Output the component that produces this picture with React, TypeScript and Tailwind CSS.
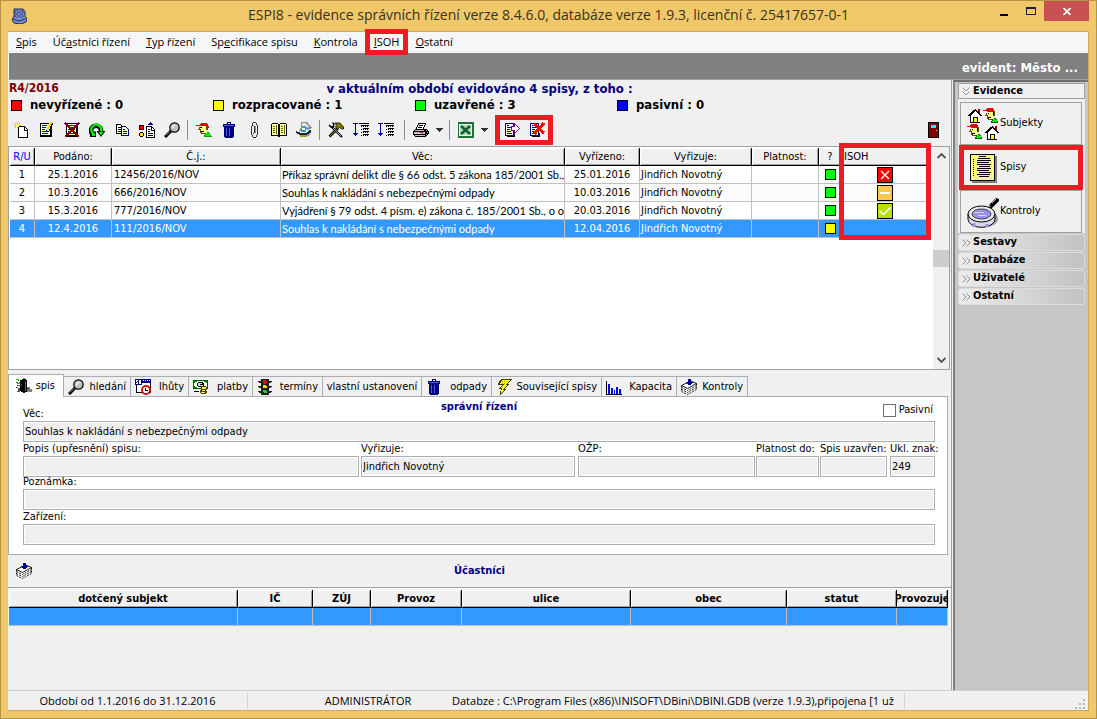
import type { ReactNode } from 'react'

const UI_FONT = "font-['DejaVu_Sans_Condensed','DejaVu_Sans',sans-serif]"
const SYS_FONT = "font-['Open_Sans','Noto_Sans',sans-serif]"

const MENU = [
  { pre: '', key: 'S', post: 'pis' },
  { pre: 'Úč', key: 'a', post: 'stníci řízení' },
  { pre: '', key: 'T', post: 'yp řízení' },
  { pre: 'Sp', key: 'e', post: 'cifikace spisu' },
  { pre: '', key: 'K', post: 'ontrola' },
  { pre: '', key: 'I', post: 'SOH', marked: true },
  { pre: '', key: 'O', post: 'statní' },
]

const COUNTERS = [
  { color: 'bg-[#ff0000]', label: 'nevyřízené : 0' },
  { color: 'bg-[#ffff00]', label: 'rozpracované : 1' },
  { color: 'bg-[#00ff00]', label: 'uzavřené : 3' },
  { color: 'bg-[#0000ff]', label: 'pasivní : 0' },
]

type Isoh = 'error' | 'wait' | 'ok' | null

const FILES: { n: number; filed: string; ref: string; subject: string; done: string; by: string; state: string; isoh: Isoh }[] = [
  { n: 1, filed: '25.1.2016', ref: '12456/2016/NOV', subject: 'Příkaz správní delikt dle § 66 odst. 5 zákona 185/2001 Sb.,', done: '25.01.2016', by: 'Jindřich Novotný', state: 'bg-[#00ff00]', isoh: 'error' },
  { n: 2, filed: '10.3.2016', ref: '666/2016/NOV', subject: 'Souhlas k nakládání s nebezpečnými odpady', done: '10.03.2016', by: 'Jindřich Novotný', state: 'bg-[#00ff00]', isoh: 'wait' },
  { n: 3, filed: '15.3.2016', ref: '777/2016/NOV', subject: 'Vyjádření § 79 odst. 4 písm. e) zákona č. 185/2001 Sb., o o', done: '20.03.2016', by: 'Jindřich Novotný', state: 'bg-[#00ff00]', isoh: 'ok' },
  { n: 4, filed: '12.4.2016', ref: '111/2016/NOV', subject: 'Souhlas k nakládání s nebezpečnými odpady', done: '12.04.2016', by: 'Jindřich Novotný', state: 'bg-[#ffff00]', isoh: null },
]

/* ---------- icons ---------- */

function Svg({ children, size = 16 }: { children: ReactNode; size?: number }) {
  return (
    <svg width={size} height={size} viewBox={`0 0 ${size} ${size}`} shapeRendering="crispEdges" fill="none" className="shrink-0" aria-hidden="true">
      {children}
    </svg>
  )
}

const NewIcon = () => (
  <Svg>
    <path d="M4 4h7v1h1v1h1v1h1v9H4z" fill="#000" />
    <path d="M5 5h5v4h3v6H5z" fill="#fff" />
    <path d="M11 6h1v1h1v1h-2z" fill="#fff" />
    <path d="M3 0h1v2H3zM0 3h2v1H0zM1 1h1v1H1zM5 1h1v1H5zM1 5h1v1H1zM3 5h1v1H3zM5 3h2v1H5z" fill="#c8b400" />
    <path d="M2 2h3v3H2z" fill="#ffff66" />
  </Svg>
)

const EditIcon = () => (
  <Svg>
    <path d="M1 1h12v14H1z" fill="#000" />
    <path d="M2 2h9v11H2z" fill="#fff" />
    <path d="M3 3h5v1H3zM3 5h4v1H3zM3 7h3v1H3zM3 9h6v1H3zM3 11h6v1H3z" fill="#00f" />
    <path d="M11 0h2v2h-1v2h-1v2h-1v2H9v1H7V7h1V5h1V3h1V1h1z" fill="#ffe000" />
    <path d="M13 1h1v2h-1v2h-1v2h-1v2h-1v1H9V9h1V7h1V5h1V3h1z" fill="#000" />
    <path d="M7 8h1v2H7z" fill="#000" />
  </Svg>
)

const DeleteIcon = () => (
  <Svg>
    <path d="M2 1h12v14H2z" fill="#000" />
    <path d="M3 2h9v11H3z" fill="#fff" />
    <path d="M4 3h7v1H4zM4 5h7v1H4zM4 7h7v1H4zM4 9h7v1H4zM4 11h7v1H4z" fill="#00f" />
    <path d="M1 1l14 14M15 1L1 15" stroke="#800000" strokeWidth="2" />
  </Svg>
)

const RefreshIcon = () => (
  <Svg>
    <g shapeRendering="auto">
      <path d="M4.500 13A5 5 0 1 1 12 9.500" stroke="#000" strokeWidth="4.600" />
      <path d="M1 9.500h6V15H1zM7.500 9h9L12 15z" fill="#000" />
      <path d="M4 11.500A5 5 0 1 1 12 9.500" stroke="#0e0" strokeWidth="2.400" />
      <path d="M3 11h3v3H3zM9.500 10h5L12 13.500z" fill="#0e0" />
    </g>
  </Svg>
)

const CopyIcon = () => (
  <Svg>
    <path d="M2.500 2.500h4l2 2v7h-6z" fill="#fff" stroke="#000" />
    <path d="M4 5.500h3M4 7.500h3M4 9.500h3" stroke="#000" />
    <path d="M7.500 4.500h4l3 3v6h-7z" fill="#fff" stroke="#000080" />
    <path d="M9 7.500h2M9 9.500h4M9 11.500h4" stroke="#000080" />
  </Svg>
)

const CategoryIcon = () => (
  <Svg>
    <path d="M.5 3.500h4v4h-4z" fill="#f00" stroke="#000" />
    <path d="M1 10h3v1h1v3H4v1H1v-1H0v-3h1z" fill="#000" />
    <path d="M1 11h3v3H1z" fill="#ffe000" />
    <path d="M11 0h1v1h1v1h1v1H9V2h1V1h1z" fill="#0000c0" />
    <path d="M7.500 4.500h5l3 3v8h-8z" fill="#fff" stroke="#000" />
    <path d="M12 5h1v3h3v1h-4zM9 7h2v1H9zM9 9h2v1H9zM9 11h5v1H9zM9 13h5v1H9z" fill="#000" />
  </Svg>
)

const SearchIcon = () => (
  <Svg>
    <g shapeRendering="auto">
      <path d="M7 9l-6 6" stroke="#000" strokeWidth="3" />
      <circle cx="10.500" cy="5.500" r="4.700" fill="#c0c0c0" stroke="#000" strokeWidth="1.200" />
      <path d="M8 6l3-3" stroke="#fff" strokeWidth="1.200" />
      <path d="M6 9.500L2 13.500" stroke="#909090" />
    </g>
  </Svg>
)

const PersonIcon = () => (
  <Svg>
    <path d="M4 3h8v5h-1v4H5v-1H4V8H2V7h1z" fill="#605000" />
    <path d="M4 4h6v4h1v3H6v-1H5V7H4z" fill="#ffff90" />
    <path d="M5 1h6v1h1v2h1v2h-2V4H0V3h4V2h1z" fill="#e00000" />
    <path d="M4 5h2v1H4zM5 9h3v1H5z" fill="#000" />
    <path d="M8 15v-2h1v-2h2v-1h2v1h1v2h1v1h1v1z" fill="#00a000" />
    <path d="M9 14v-1h1v-2h3v1h1v2z" fill="#00f000" />
  </Svg>
)

const TrashIcon = () => (
  <Svg>
    <path d="M2 2h4V0h4v2h4v3h-1v10h-1v1H4v-1H3V5H2z" fill="#000080" />
    <path d="M3 3h10v1H3zM5 6h1v8H5zM8 6h1v8H8z" fill="#4060e0" />
    <path d="M7 1h2v1H7z" fill="#fff" />
  </Svg>
)

const ClipIcon = () => (
  <Svg>
    <path d="M7 0h3v1H7zM6 1h1v3H6zM10 1h1v2h-1zM11 3h1v10h-1zM5 4h1v9H5zM8 4h1v7H8zM7 11h1v1H7zM6 13h1v2H6zM10 13h1v2h-1zM7 15h3v1H7z" fill="#303030" />
    <path d="M7 3h1v1H7zM9 4h1v7H9z" fill="#909090" />
  </Svg>
)

const BookIcon = () => (
  <Svg>
    <path d="M0 2h1V1h6v1h2V1h6v1h1v12H9v1H7v-1H0z" fill="#000" />
    <path d="M1 2h6v11H1zM9 2h6v11H9z" fill="#ffffa0" />
    <path d="M2 4h2v1H2zM2 6h2v1H2zM2 8h2v1H2zM2 10h2v1H2zM10 4h2v1h-2zM10 6h2v1h-2zM10 8h2v1h-2zM10 10h2v1h-2zM5 3h1v9H5zM13 3h1v9h-1z" fill="#606000" />
  </Svg>
)

const ScanIcon = () => (
  <Svg>
    <path d="M5 0h6l1 1 2 3 2 1-1 2-4 1-2-2H7L5 9H3l2-4z" fill="#909090" />
    <path d="M6 1h4l3 4-2 1-2-2H6z" fill="#e4e4e4" />
    <path d="M6 5h5l-1 5H5z" fill="#00a8e8" />
    <path d="M6 6h3v2H6z" fill="#fff" />
    <path d="M0 9l5 2h5l4-3 1 1v2l-5 3H7l-7-3z" fill="#202050" />
    <path d="M4 13h6l4-2v2l-4 2H4z" fill="#b0a000" />
  </Svg>
)

const ToolsIcon = () => (
  <Svg>
    <g shapeRendering="auto">
      <path d="M1.500 14.500L10 6" stroke="#000" strokeWidth="2.600" />
      <path d="M2 14L10 6" stroke="#b09000" />
      <path d="M7 1h5l3.500 4v2h-2l-2-2-2 2-2-2 1-2z" fill="#808000" stroke="#000" strokeWidth=".8" />
      <path d="M3.500 4.500L14 15" stroke="#000" strokeWidth="2.200" />
      <path d="M1 3l2 2 2.500-.5L6 2 4.500.5" stroke="#000" strokeWidth="1.400" />
      <path d="M5 6l8 8" stroke="#d0d0d0" strokeWidth=".8" />
    </g>
  </Svg>
)

const SortIcon = () => (
  <Svg>
    <path d="M0 1h5v1H3v9h2v1H4v1H3v1H2v-1H1v-1H0v-1h2V2H0z" fill="#0000a0" />
    <path d="M6 1h10v1H6zM8 3h8v1H8zM10 6h6v1h-6zM10 9h6v1h-6zM10 12h6v1h-6z" fill="#000" />
    <path d="M8 4.500h8M8 7.500h8M8 10.500h8M8 13.500h8" stroke="#000" strokeDasharray="1 1" />
  </Svg>
)

const PrinterIcon = () => (
  <Svg>
    <path d="M5 1h8v2h-1v2h-1v2h3v1h1v1h1v3h-1v1h-1v1h-1v1H2v-1H1v-1H0V9h1V8h1V7h1V5h1V3h1z" fill="#000" />
    <path d="M6 2h6v1h-1v2h-1v2H4V5h1V3h1z" fill="#fff" />
    <path d="M6 3h4v1H6zM5 5h4v1H5z" fill="#000" />
    <path d="M2 8h9v1H2zM1 10h11v2H1zM2 13h10v1H2z" fill="#c0c0c0" />
    <path d="M7 10h3v1H7z" fill="#f00" />
    <path d="M13 8h1v1h-1zM14 10h1v1h-1zM13 12h1v1h-1z" fill="#a0a0a0" />
  </Svg>
)

const ExcelIcon = () => (
  <Svg>
    <path d="M0 0h16v16H0z" fill="#1e7038" />
    <path d="M1 2h13v12H1z" fill="#e8f4e8" />
    <path d="M2 3h11v10H2z" fill="#b4d8b4" />
    <g shapeRendering="auto"><path d="M3 4l9 8M12 4l-9 8" stroke="#106030" strokeWidth="2.600" /></g>
  </Svg>
)

const ExportIcon = () => (
  <Svg>
    <path d="M1 1h9v13H1z" fill="#000080" />
    <path d="M2 2h7v11H2zM2 14h9v1H2z" fill="#fff" />
    <path d="M3 15h8v-4h-1v3H3z" fill="#000" />
    <path d="M3 3h2v1H3zM3 5h4v1H3zM3 7h3v1H3zM3 9h4v1H3zM3 11h5v1H3z" fill="#0000a0" />
    <path d="M7.500 4.500h3v-3l5 5-5 5v-3h-3z" fill="#fff" stroke="#800080" />
  </Svg>
)

const ExportDeleteIcon = () => (
  <Svg>
    <path d="M1 1h9v13H1z" fill="#000080" />
    <path d="M2 2h7v11H2z" fill="#fff" />
    <path d="M3 15h8v-4h-1v3H3z" fill="#000" />
    <path d="M3 3h2v1H3zM3 5h4v1H3zM3 7h3v1H3zM3 9h4v1H3zM3 11h5v1H3z" fill="#0000a0" />
    <path d="M5 2l10 9M15 1L5 12" stroke="#f00" strokeWidth="3" />
  </Svg>
)

const DoorIcon = () => (
  <Svg>
    <path d="M2 0h11v16H2z" fill="#000" />
    <path d="M3 1h9v14H3z" fill="#800000" />
    <path d="M5 3h5v3H5z" fill="#00ffff" />
    <path d="M10 8h1v1h-1z" fill="#ffff00" />
  </Svg>
)

const FileTabIcon = () => (
  <Svg>
    <path d="M4 2h2V1h4v1h1v12H9v1H7v-1H5v-1H4z" fill="#000" />
    <path d="M9 3h1v10H9z" fill="#606060" />
    <path d="M0 4h2v1H0zM2 2h1v1H2zM1 7h3v1H1zM0 9h2v1H0zM2 10h2v4H1v-1h1zM5 6h1v2H5z" fill="#505050" />
    <path d="M0 1h3v1H0zM3 4h1v2H1V5h2zM7 0h2v1H7z" fill="#00d000" />
    <path d="M11 9h3v2h2v3h-5z" fill="#808080" />
    <path d="M11 10h2v1h-2z" fill="#303030" />
  </Svg>
)

const DeadlineIcon = () => (
  <Svg>
    <path d="M1.500 1.500h14v12h-14z" fill="#fff" stroke="#000" />
    <path d="M0 0h16v4H7v2H0z" fill="#000080" />
    <path d="M1 1h2v1H2v1h1v2H1V4h1V3H1zM4 1h2v4H4z" fill="#fff" />
    <path d="M8 1.500h7" stroke="#fff" strokeDasharray="1 1" />
    <circle cx="11" cy="11" r="4" fill="#fff" stroke="#e00000" strokeWidth="1.800" shapeRendering="auto" />
    <path d="M10 9h1v2h2v1h-3z" fill="#000" />
  </Svg>
)

const PaymentIcon = () => (
  <Svg>
    <path d="M0 1h15v9H0z" fill="#006000" />
    <path d="M1 2h13v7H1z" fill="#fff" />
    <path d="M1 2h3v1H2v1H1zM11 2h3v2h-1V3h-2zM1 7h1v1h2v1H1z" fill="#008000" />
    <path d="M5 3h5v1h1v3h-1v1H5V7H4V4h1z" fill="#000" />
    <path d="M5 4h4v1H7v1h3v1H5z" fill="#c8e8c8" />
    <path d="M1 12h5v1H1z" fill="#000" />
    <path d="M9 7h4v1h1v3h-1v1h1v2h-1v1H8v-1H7v-3h1V8h1z" fill="#504000" />
    <path d="M9 8h4v2H9zM9 11h3v1H9zM8 13h4v1H8z" fill="#ffe860" />
  </Svg>
)

const LightsIcon = () => (
  <Svg>
    <path d="M4 0h8v2h3v1h-1v1h-2v3h3v1h-1v1h-2v3h3v1h-1v1h-2v2H4v-2H2v-1H1v-1h3V9H2V8H1V7h3V4H2V3H1V2h3z" fill="#202020" />
    <path d="M6 1h3v1h1v2H9v1H7V4H6z" fill="#f00" />
    <path d="M6 6h3v1h1v2H6z" fill="#ffe000" />
    <path d="M6 11h3v1h1v2H7v-1H6z" fill="#00e000" />
  </Svg>
)

const BoltIcon = () => (
  <Svg>
    <path d="M5 0h11l-5 5h2l-5 5h2l-6 6v-2l1-4H3l3-4H2l1-3z" fill="#404000" />
    <path d="M6 1h8l-5 5h2L6 11h2l-3 3 1-5H5l3-4H4z" fill="#ffff00" />
    <path d="M6 2.500h6M6 4.500h3" stroke="#a0a000" strokeDasharray="1 1" />
  </Svg>
)

const ChartIcon = () => (
  <Svg>
    <path d="M0 2h1v13h15v1H0z" fill="#000" />
    <path d="M2 5h2v10H2zM5 9h2v6H5zM8 11h1v4H8zM10 8h2v7h-2zM13 10h2v5h-2z" fill="#0000ff" />
  </Svg>
)

const StackIcon = () => (
  <Svg>
    <path d="M0 6l9-5 7 3v7l-9 5-7-3z" fill="#fff" />
    <g stroke="#000" shapeRendering="auto" strokeWidth=".9">
      <path d="M.5 6.500L9.500 2l6 2.500L6.500 9.500z" />
      <path d="M.5 8.500l6 3 9-5M.5 10.500l6 3 9-5M.5 12.500l6 3 9-5M.5 6.500v6M15.500 4.500v6" strokeDasharray="2 1" />
    </g>
    <path d="M7 0h3v3h2v1h-1v1h-1v1H7V5H6V4H5V3h2z" fill="#0000a0" />
  </Svg>
)

function HouseShape() {
  return (
    <>
      <path d="M7 0h1v1h1v1h1v1h1v1h1v1h1v1h1v1h-2v7H2V7H0V6h1V5h1V4h1V3h1V2h1V1h2z" fill="#000" />
      <path d="M7 2h1v1h1v1h1v1h1v1h1v7H3V6h1V5h1V4h1V3h1z" fill="#fff" />
      <path d="M10 0h2v4h-1V3h-1z" fill="#a00000" />
      <path d="M5 8h5v6H5z" fill="#000" />
      <path d="M6 9h3v4H6z" fill="#ffff00" />
    </>
  )
}

function HeadShape() {
  return (
    <>
      <path d="M4 3h8v5h-1v4H5v-1H4V8H2V7h1z" fill="#605000" />
      <path d="M4 4h6v4h1v3H6v-1H5V7H4z" fill="#ffff90" />
      <path d="M4 0h6v1h1v3H9V3H0V2h3V1h1z" fill="#e80000" />
      <path d="M10 4h1v3h-1zM5 5h1v1H5zM5 9h3v1H5z" fill="#000" />
      <path d="M8 15v-2h1v-2h2v-1h2v1h1v2h1v2z" fill="#006000" />
      <path d="M9 14v-1h1v-2h3v1h1v2z" fill="#00f000" />
    </>
  )
}

const SubjectsIcon = () => (
  <Svg size={32}>
    <g transform="translate(1 1)"><HouseShape /></g>
    <g transform="translate(16 0)"><HeadShape /></g>
    <g transform="translate(0 16)"><HeadShape /></g>
    <g transform="translate(18 18)"><HouseShape /></g>
  </Svg>
)

const PaperIcon = () => (
  <Svg size={32}>
    <path d="M5 4h25v27H5z" fill="#808080" />
    <path d="M3.500 2.500h24v26h-24z" fill="#ffff60" stroke="#000" />
    <path d="M5.500 4.500h20v22h-20z" stroke="#ffffb0" strokeDasharray="1 1" />
    <path d="M12 4.500h7M11 6.500h12M10 8.500h14M10 10.500h12M10 12.500h14M12 14.500h11M10 16.500h14M10 18.500h12M12 20.500h12M10 22.500h13M12 24.500h10" stroke="#000" />
    <path d="M6.500 7v18" stroke="#000" strokeDasharray="1 1" />
  </Svg>
)

const LensIcon = () => (
  <Svg size={32}>
    <g shapeRendering="auto">
      <ellipse cx="18" cy="23" rx="13" ry="8" fill="#707070" opacity=".6" />
      <path d="M21 12l2-4 6-6 3 1v2l-6 6-3 3z" fill="#000" />
      <path d="M25 7l4-4" stroke="#b0b0b0" />
      <path d="M20 13l3-3" stroke="#b0b0b0" strokeWidth="2" />
      <path d="M1 18v5c1 11 26 11 27 0v-5z" fill="#d8d8f0" stroke="#000" />
      <path d="M7 27v4M20 28v3" stroke="#9090e0" strokeWidth="3" />
      <ellipse cx="14.500" cy="18" rx="13.500" ry="8" fill="#e8e8e8" stroke="#000" />
      <ellipse cx="14.500" cy="18" rx="9.500" ry="5" fill="#9890f0" stroke="#404040" />
    </g>
    <path d="M7 16h10v1H7zM11 19h8v1h-8z" fill="#d8d4ff" />
  </Svg>
)

const AppIcon = () => (
  <Svg>
    <g shapeRendering="auto">
      <path d="M3 1h9l2 3v4l2 3-1 3-5 2-7-1-2-3 2-4z" fill="#7b8fd0" stroke="#1c2a5c" />
      <path d="M4 3h3v2H4zM9 3h3v2H9zM4 7h3v2H4zM9 7h3v2H9z" fill="#c8d2f4" stroke="#1c2a5c" strokeWidth=".8" />
      <path d="M2 11l6 2 6-2" stroke="#1c2a5c" />
    </g>
  </Svg>
)

function IsohMark({ kind }: { kind: Isoh }) {
  if (kind === 'error')
    return (
      <Svg>
        <path d="M.5.5h15v15H.5z" fill="#f00" stroke="#000" />
        <path d="M4 4l8 8M12 4l-8 8" stroke="#fff" strokeWidth="1.400" shapeRendering="auto" />
      </Svg>
    )
  if (kind === 'wait')
    return (
      <Svg>
        <path d="M.5.5h15v15H.5z" fill="#ffc84c" stroke="#000" />
        <path d="M3 7h10v2H3z" fill="#fff" />
      </Svg>
    )
  if (kind === 'ok')
    return (
      <Svg>
        <path d="M.5.5h15v15H.5z" fill="#b8e000" stroke="#000" />
        <path d="M2.500 8l4 3.500 7-7" stroke="#fff" strokeWidth="1.600" shapeRendering="auto" />
      </Svg>
    )
  return null
}

/* ---------- small parts ---------- */

// red marker frame laid over a control
function Marker({ className }: { className: string }) {
  return <span className={`pointer-events-none absolute z-10 border-[5px] border-[#ed1c24] ${className}`} />
}

function ToolButton({ label, children }: { label: string; children: ReactNode }) {
  return (
    <button type="button" aria-label={label} className="flex h-6 w-[25px] items-center justify-center">
      {children}
    </button>
  )
}

function DropArrow({ label }: { label: string }) {
  return (
    <button type="button" aria-label={label} className="flex h-6 w-[13px] items-center justify-center">
      <svg width="7" height="4" viewBox="0 0 7 4" fill="#303030" shapeRendering="crispEdges"><path d="M0 0h7L3.500 4z" /></svg>
    </button>
  )
}

const Separator = () => <span className="mx-[3px] h-5 w-px bg-[#8c8c8c]" />

function Field({ id, label, value = '', className = '' }: { id: string; label: string; value?: string; className?: string }) {
  return (
    <div className={`flex flex-col ${className}`}>
      <label htmlFor={id} className="h-[14px] leading-[14px] whitespace-nowrap">{label}</label>
      <input id={id} readOnly defaultValue={value} className="h-[21px] w-full border border-[#abadb3] bg-[#efefef] px-px shadow-[inset_0_0_0_1px_#fff] outline-none" />
    </div>
  )
}

function Th({ children, bold, className = 'text-center' }: { children: ReactNode; bold?: boolean; className?: string }) {
  return (
    <th className={`h-[18px] overflow-hidden border-r border-b border-black bg-[#f0f0f0] p-0 whitespace-nowrap shadow-[inset_1px_1px_0_#fff,inset_-1px_-1px_0_#a0a0a0] ${bold ? 'font-bold' : 'font-normal'} ${className}`}>
      {children}
    </th>
  )
}

/* ---------- sections ---------- */

function TitleBar() {
  return (
    <header className={`relative flex h-[30px] shrink-0 items-center ${SYS_FONT}`}>
      <span className="ml-[3px]"><AppIcon /></span>
      <h1 className="min-w-0 flex-1 truncate pb-[2px] pl-[80px] text-center text-[14px] leading-[20px] text-[#3a3020]">
        ESPI8 - evidence správních řízení verze 8.4.6.0, databáze verze 1.9.3, licenční č. 25417657-0-1
      </h1>
      <div className="flex h-full items-start">
        <button type="button" aria-label="Minimalizovat" className="flex h-5 w-[27px] items-center justify-center">
          <svg width="8" height="12" viewBox="0 0 8 12" fill="#000"><path d="M0 9h8v2H0z" /></svg>
        </button>
        <button type="button" aria-label="Maximalizovat" className="flex h-5 w-[27px] items-center justify-center">
          <svg width="10" height="8" viewBox="0 0 10 8" fill="none" stroke="#222" shapeRendering="crispEdges"><path d="M.5 1h9v6.500h-9z" /><path d="M0 1h10" strokeWidth="2" /></svg>
        </button>
        <button type="button" aria-label="Zavřít" className="flex h-5 w-[45px] items-center justify-center bg-[#c75050]">
          <svg width="8" height="7" viewBox="0 0 8 7" fill="none" stroke="#fff" strokeWidth="1.800"><path d="M.5 0l7 7M7.500 0l-7 7" /></svg>
        </button>
      </div>
    </header>
  )
}

function MenuBar() {
  return (
    <nav className={`flex h-5 shrink-0 items-center border-b border-[#e8e8e8] bg-[#f5f6f7] text-[11px] leading-[16px] ${SYS_FONT}`}>
      {MENU.map(m => (
        <button key={m.key} type="button" className="relative px-2 whitespace-nowrap">
          {m.pre}<span className="underline">{m.key}</span>{m.post}
          {m.marked && <Marker className="-inset-x-px -top-[5px] -bottom-[5px]" />}
        </button>
      ))}
    </nav>
  )
}

function Summary() {
  return (
    <section className="shrink-0 text-[13px] font-bold">
      <div className="grid grid-cols-[1fr_auto_1fr] leading-[17px]">
        <span className="pl-px text-[12px] text-[#800000]">R4/2016</span>
        <span className="text-[#000080]">v aktuálním období evidováno 4 spisy, z toho :</span>
      </div>
      <div className="flex h-4 items-center">
        {COUNTERS.map(c => (
          <span key={c.label} className="flex w-[202px] items-center gap-2 pl-[3px] leading-[16px]">
            <span className={`h-[11px] w-[11px] border border-black ${c.color}`} />
            {c.label}
          </span>
        ))}
      </div>
    </section>
  )
}

function Toolbar() {
  return (
    <div className="flex h-[33px] shrink-0 items-center pl-px">
      <ToolButton label="Nový"><NewIcon /></ToolButton>
      <ToolButton label="Upravit"><EditIcon /></ToolButton>
      <ToolButton label="Smazat"><DeleteIcon /></ToolButton>
      <ToolButton label="Obnovit"><RefreshIcon /></ToolButton>
      <ToolButton label="Kopírovat"><CopyIcon /></ToolButton>
      <ToolButton label="Třídit"><CategoryIcon /></ToolButton>
      <ToolButton label="Hledat"><SearchIcon /></ToolButton>
      <Separator />
      <ToolButton label="Subjekt"><PersonIcon /></ToolButton>
      <ToolButton label="Odpady"><TrashIcon /></ToolButton>
      <ToolButton label="Přílohy"><ClipIcon /></ToolButton>
      <ToolButton label="Kniha"><BookIcon /></ToolButton>
      <ToolButton label="Skenovat"><ScanIcon /></ToolButton>
      <Separator />
      <ToolButton label="Nástroje"><ToolsIcon /></ToolButton>
      <ToolButton label="Řadit vzestupně"><SortIcon /></ToolButton>
      <ToolButton label="Řadit sestupně"><SortIcon /></ToolButton>
      <div className="ml-[3px] flex items-center">
        <Separator />
        <ToolButton label="Tisk"><PrinterIcon /></ToolButton>
        <DropArrow label="Volby tisku" />
        <Separator />
        <ToolButton label="Excel"><ExcelIcon /></ToolButton>
        <DropArrow label="Volby exportu" />
      </div>
      <div className="relative ml-2 flex">
        <ToolButton label="Odeslat do ISOH"><ExportIcon /></ToolButton>
        <ToolButton label="Zrušit odeslání"><ExportDeleteIcon /></ToolButton>
        <Marker className="-inset-x-1 -inset-y-[3px]" />
      </div>
      <span className="ml-auto pr-[5px]"><ToolButton label="Zavřít okno"><DoorIcon /></ToolButton></span>
    </div>
  )
}

function FilesGrid() {
  const cell = 'h-[18px] overflow-hidden border-r border-b border-[#c0c0c0] p-0 whitespace-nowrap'
  return (
    <section className="mr-px flex h-[224px] shrink-0 border border-[#a0a0a0] bg-white">
      <div className="relative min-w-0 flex-1 pt-px pr-1 pl-px">
        <table className="w-full table-fixed border-separate border-spacing-0 leading-[17px]">
          <colgroup>
            <col className="w-[25px]" />
            <col className="w-[77px]" />
            <col className="w-[169px]" />
            <col />
            <col className="w-[75px]" />
            <col className="w-[112px]" />
            <col className="w-[67px]" />
            <col className="w-[23px]" />
            <col className="w-[87px]" />
          </colgroup>
          <thead>
            <tr>
              <Th className="text-center text-[#0000ff]">R/U</Th>
              <Th>Podáno:</Th>
              <Th>Č.j.:</Th>
              <Th>Věc:</Th>
              <Th>Vyřízeno:</Th>
              <Th>Vyřizuje:</Th>
              <Th>Platnost:</Th>
              <Th>?</Th>
              <Th className="text-left"><span className="ml-[2px]">ISOH</span></Th>
            </tr>
          </thead>
          <tbody>
            {FILES.map(f => (
              <tr key={f.n} className={f.n === 4 ? 'bg-[#3399ff] text-white' : 'bg-white even:bg-[#fbfbfb]'}>
                <td className={`${cell} text-center`}>{f.n}</td>
                <td className={`${cell} text-center`}>{f.filed}</td>
                <td className={cell}><span className="ml-[2px]">{f.ref}</span></td>
                <td className={`${cell} font-['Lato',sans-serif]`}><span className="ml-px">{f.subject}</span></td>
                <td className={`${cell} text-center`}>{f.done}</td>
                <td className={cell}><span className="ml-px">{f.by}</span></td>
                <td className={cell} />
                <td className={cell}><span className={`mx-auto block h-[11px] w-[11px] border border-black ${f.state}`} /></td>
                <td className={cell}><span className="flex justify-center"><IsohMark kind={f.isoh} /></span></td>
              </tr>
            ))}
          </tbody>
        </table>
        <Marker className="-top-1 right-[2px] h-[97px] w-[92px]" />
      </div>
      <div className="flex w-4 flex-col items-center bg-[#f0f0f0] py-[6px]">
        <svg width="9" height="6" viewBox="0 0 9 6" fill="none" stroke="#505050" strokeWidth="1.800"><path d="M.5 5l4-4 4 4" /></svg>
        <div className="flex-[86]" />
        <div className="h-[17px] w-full bg-[#cdcdcd]" />
        <div className="flex-[86]" />
        <svg width="9" height="6" viewBox="0 0 9 6" fill="none" stroke="#505050" strokeWidth="1.800"><path d="M.5 1l4 4 4-4" /></svg>
      </div>
    </section>
  )
}

const TABS: { label: string; width: string; icon?: ReactNode }[] = [
  { label: 'hledání', width: 'w-[67px]', icon: <SearchIcon /> },
  { label: 'lhůty', width: 'w-[58px]', icon: <DeadlineIcon /> },
  { label: 'platby', width: 'w-[64px]', icon: <PaymentIcon /> },
  { label: 'termíny', width: 'w-[70px]', icon: <LightsIcon /> },
  { label: 'vlastní ustanovení', width: 'w-[99px]' },
  { label: 'odpady', width: 'w-[70px]', icon: <TrashIcon /> },
  { label: 'Související spisy', width: 'w-[110px]', icon: <BoltIcon /> },
  { label: 'Kapacita', width: 'w-[75px]', icon: <ChartIcon /> },
  { label: 'Kontroly', width: 'w-[71px]', icon: <StackIcon /> },
]

function Detail() {
  return (
    <section className="shrink-0 pt-1 pr-[3px]">
      <div role="tablist" className="flex items-end">
        <button type="button" role="tab" aria-selected="true" className="relative z-[1] -mb-px flex h-[23px] w-14 items-center justify-between border border-b-0 border-[#abadb3] bg-white pr-2 pl-[7px]">
          <FileTabIcon />spis
        </button>
        {TABS.map(t => (
          <button
            key={t.label}
            type="button"
            role="tab"
            aria-selected="false"
            className={`flex h-5 items-center border border-b-0 border-l-0 border-[#abadb3] bg-[#f0f0f0] px-1 pt-px whitespace-nowrap ${t.width} ${t.icon ? 'justify-between' : 'justify-center'}`}
          >
            {t.icon}{t.label}
          </button>
        ))}
      </div>
      <div role="tabpanel" className="h-[159px] border border-[#abadb3] bg-white pr-3 pl-[14px]">
        <div className="relative pt-[10px]">
          <Field id="vec" label="Věc:" value="Souhlas k nakládání s nebezpečnými odpady" />
          <h2 className="absolute top-[2px] left-1/2 -translate-x-1/2 text-[11px] leading-[16px] font-bold text-[#000080]">správní řízení</h2>
          <label className="absolute top-[6px] right-[2px] flex items-center gap-[3px] leading-[14px]">
            <input type="checkbox" className="h-[13px] w-[13px] appearance-none border border-[#707070] bg-white" />
            Pasivní
          </label>
        </div>
        <div className="flex">
          <Field id="popis" label="Popis (upřesnění) spisu:" className="flex-1" />
          <Field id="vyrizuje" label="Vyřizuje:" value="Jindřich Novotný" className="ml-[2px] w-[214px]" />
          <Field id="ozp" label="OŽP:" className="ml-[3px] w-[177px]" />
          <Field id="platnost" label="Platnost do:" className="ml-px w-[63px]" />
          <Field id="uzavren" label="Spis uzavřen:" className="ml-px w-[67px]" />
          <Field id="znak" label="Ukl. znak:" value="249" className="ml-[3px] w-[45px]" />
        </div>
        <Field id="poznamka" label="Poznámka:" className="-mt-[2px]" />
        <Field id="zarizeni" label="Zařízení:" />
      </div>
    </section>
  )
}

function Parties() {
  return (
    <section className="flex min-h-0 flex-1 flex-col">
      <div className="flex h-[33px] shrink-0 items-center border-b border-[#a0a0a0] pl-2">
        <button type="button" aria-label="Přidat účastníka"><StackIcon /></button>
        <h2 className="flex-1 pr-6 text-center text-[11px] font-bold text-[#000080]">Účastníci</h2>
      </div>
      <div className="flex-1 border-t border-white pt-px pr-[3px] pl-px">
        <table className="w-full table-fixed border-separate border-spacing-0 leading-[17px]">
          <colgroup>
            <col />
            <col className="w-[75px]" />
            <col className="w-[58px]" />
            <col className="w-[91px]" />
            <col className="w-[169px]" />
            <col className="w-[156px]" />
            <col className="w-[110px]" />
            <col className="w-[51px]" />
          </colgroup>
          <thead>
            <tr>
              <Th bold>dotčený subjekt</Th>
              <Th bold>IČ</Th>
              <Th bold>ZÚJ</Th>
              <Th bold>Provoz</Th>
              <Th bold>ulice</Th>
              <Th bold>obec</Th>
              <Th bold>statut</Th>
              <Th bold><span className="-mx-2 flex justify-center">Provozuje</span></Th>
            </tr>
          </thead>
          <tbody>
            <tr className="bg-[#3399ff]">
              {Array.from({ length: 8 }, (_, i) => <td key={i} className="h-[18px] border-r border-b border-[#c0c0c0] p-0" />)}
            </tr>
          </tbody>
        </table>
      </div>
    </section>
  )
}

function SideButton({ label, icon, marked }: { label: string; icon: ReactNode; marked?: boolean }) {
  return (
    <button type="button" className="relative flex h-[43px] w-full items-center gap-px border border-[#a0a0a0] bg-[#f0f0f0] pl-[6px] text-left">
      {icon}{label}
      {marked && <Marker className="-inset-[2px]" />}
    </button>
  )
}

function Sidebar() {
  return (
    <aside className="ml-px w-[135px] shrink-0 border-t-2 border-l-2 border-[#808080] border-t-[#707070] bg-[#c6c6c6] pt-px pr-[3px] pl-[3px]">
      <h2 className="flex h-4 items-center gap-[3px] border border-[#a0a0a0] bg-[#f0f0f0] pl-[3px] text-[11px] font-bold">
        <svg width="8" height="9" viewBox="0 0 8 9" fill="none" stroke="#909090"><path d="M.5.5L4 4 7.500.5M.5 4.500L4 8l3.500-3.500" /></svg>
        Evidence
      </h2>
      <div className="flex flex-col gap-px bg-[#f0f0f0] pt-[3px] pr-[3px] pl-[2px]">
        <SideButton label="Subjekty" icon={<SubjectsIcon />} />
        <SideButton label="Spisy" icon={<PaperIcon />} marked />
        <SideButton label="Kontroly" icon={<LensIcon />} />
      </div>
      <div className="flex flex-col gap-px pt-px">
        {['Sestavy', 'Databáze', 'Uživatelé', 'Ostatní'].map(s => (
          <button key={s} type="button" className="flex h-[17px] items-center gap-[2px] rounded-[3px] border border-[#dcdcdc] bg-linear-to-r from-[#ececec] to-[#c2c2c2] pl-[3px] text-[11px] font-bold">
            <svg width="9" height="8" viewBox="0 0 9 8" fill="none" stroke="#909090"><path d="M.5.5L4 4 .5 7.500M4.500.5L8 4 4.500 7.500" /></svg>
            {s}
          </button>
        ))}
      </div>
    </aside>
  )
}

function StatusBar() {
  return (
    <footer className={`flex h-5 shrink-0 items-center border-t border-[#d0d0d0] bg-[#f0f0f0] text-[11px] leading-[16px] whitespace-nowrap ${SYS_FONT}`}>
      <span className="w-[240px] border-r border-[#d0d0d0] text-center">Období od 1.1.2016 do 31.12.2016</span>
      <span className="w-[240px] text-center">ADMINISTRÁTOR</span>
      <span className="-ml-9 w-[453px] overflow-hidden border-r border-[#d0d0d0]">Databze : C:\Program Files (x86)\INISOFT\DBini\DBINI.GDB (verze 1.9.3),připojena [1 už</span>
      <svg className="mr-[2px] ml-auto self-end" width="11" height="11" viewBox="0 0 11 11" fill="#b8b8b8">
        <path d="M8 0h2v2H8zM8 4h2v2H8zM8 8h2v2H8zM4 4h2v2H4zM4 8h2v2H4zM0 8h2v2H0z" />
      </svg>
    </footer>
  )
}

export default function App() {
  return (
    <div className={`flex min-h-screen flex-col border border-[#b3944b] bg-[#f0c869] px-[7px] pb-[7px] text-[11px] text-black ${UI_FONT}`}>
      <TitleBar />
      <div className="flex flex-1 flex-col border border-l-0 border-[#c9a95c] bg-[#f0f0f0]">
        <MenuBar />
        <div className="flex h-[28px] shrink-0 items-center justify-end border-t border-b border-l border-[#fff] border-b-[#a0a0a0] bg-[#808080] pt-1 pr-[10px] text-[13px] font-bold text-white">
          evident: Město ...
        </div>
        <div className="flex flex-1">
          <main className="flex min-w-0 flex-1 flex-col border-r border-[#a0a0a0]">
            <Summary />
            <Toolbar />
            <FilesGrid />
            <Detail />
            <Parties />
          </main>
          <Sidebar />
        </div>
        <StatusBar />
      </div>
    </div>
  )
}
